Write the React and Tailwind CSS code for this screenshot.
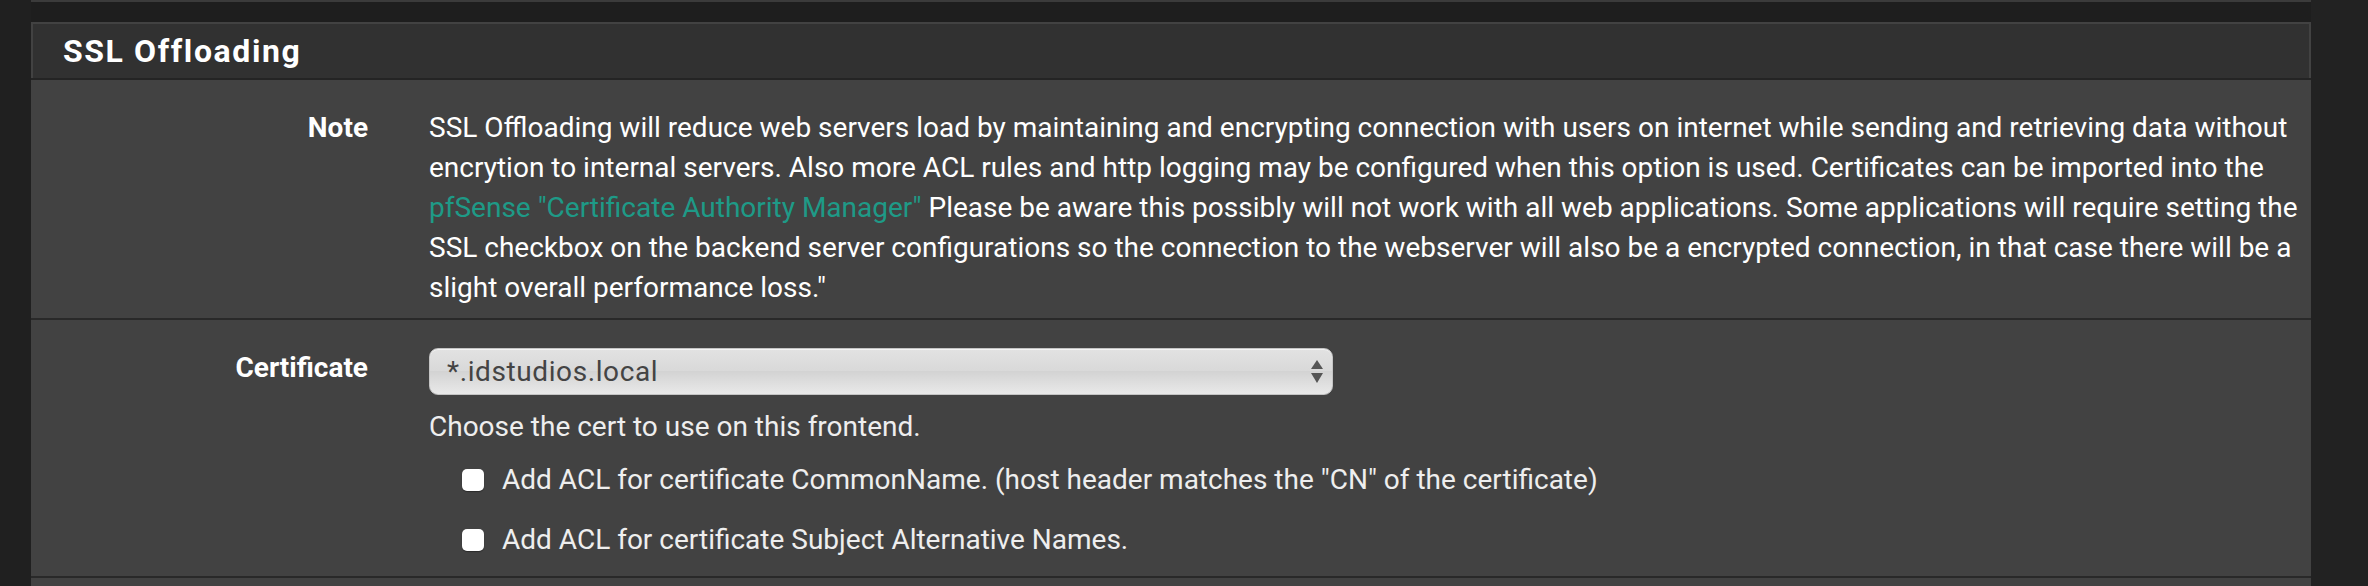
import React from 'react';

const noteLines = [
  'SSL Offloading will reduce web servers load by maintaining and encrypting connection with users on internet while sending and retrieving data without',
  'encrytion to internal servers. Also more ACL rules and http logging may be configured when this option is used. Certificates can be imported into the',
  null,
  'SSL checkbox on the backend server configurations so the connection to the webserver will also be a encrypted connection, in that case there will be a',
  'slight overall performance loss."',
];

const SelectArrows = () => (
  <svg width="14" height="26" viewBox="0 0 14 26" className="shrink-0">
    <polygon points="7,1 13,10 1,10" fill="#555555" />
    <polygon points="1,14 13,14 7,24" fill="#555555" />
  </svg>
);

const Checkbox = ({ label }) => (
  <label className="flex items-center h-[40px] pl-[33px]">
    <span className="w-[22px] h-[22px] rounded-[5px] bg-white shadow-[0_1px_1px_rgba(0,0,0,0.35)] shrink-0" />
    <span className="ml-[18px] text-[#eeeeee] whitespace-nowrap">{label}</span>
  </label>
);

const App = () => {
  return (
    <div className="w-[2368px] h-[586px] bg-[#202020] flex overflow-hidden font-['Roboto',sans-serif] text-[28px] leading-[40px]">
      <div className="w-[31px] shrink-0" />

      <div className="w-[2280px] shrink-0 flex flex-col">
        {/* previous panel edge + gap */}
        <div className="h-[2px] bg-[#3b3b3b]" />
        <div className="h-[20px] bg-[#1e1e1e]" />

        {/* Panel heading */}
        <div className="h-[56px] border-t-2 border-x-2 border-[#424242] bg-[#313131] flex items-center pl-[30px]">
          <h2 className="text-[32px] font-bold tracking-[1.6px] text-white leading-none">SSL Offloading</h2>
        </div>
        <div className="h-[2px] bg-[#242424]" />

        {/* Panel body */}
        <div className="flex-1 bg-[#424242] flex flex-col">
          {/* Note row */}
          <div className="flex pt-[28px] pb-[10px]">
            <div className="w-[337px] shrink-0 text-right font-bold text-white">Note</div>
            <div className="ml-[61px] text-white">
              {noteLines.map((line, i) =>
                line === null ? (
                  <div key={i} className="whitespace-nowrap">
                    <a className="text-[#1e9a87]">pfSense "Certificate Authority Manager"</a>
                    {' Please be aware this possibly will not work with all web applications. Some applications will require setting the'}
                  </div>
                ) : (
                  <div key={i} className="whitespace-nowrap">{line}</div>
                )
              )}
            </div>
          </div>

          <div className="h-[2px] bg-[#292929]" />

          {/* Certificate row */}
          <div className="flex pt-[28px] pb-[16px]">
            <div className="w-[337px] shrink-0 text-right font-bold text-white">Certificate</div>
            <div className="ml-[61px] flex flex-col">
              <div className="w-[904px] h-[47px] rounded-[9px] border border-[#c4c4c4] bg-[linear-gradient(to_bottom,#e2e2e2_0%,#d9d9d9_48%,#d3d3d3_50%,#dedede_75%,#e9e9e9_100%)] shadow-[inset_0_1px_0_rgba(255,255,255,0.6)] flex items-center pl-[17px] pr-[8px]">
                <span className="flex-1 text-[#444444] leading-none tracking-[0.6px]">*.idstudios.local</span>
                <SelectArrows />
              </div>
              <div className="mt-[12px] text-[#eeeeee]">Choose the cert to use on this frontend.</div>
              <div className="mt-[13px] flex flex-col gap-[20px]">
                <Checkbox label={'Add ACL for certificate CommonName. (host header matches the "CN" of the certificate)'} />
                <Checkbox label="Add ACL for certificate Subject Alternative Names." />
              </div>
            </div>
          </div>

          <div className="h-[2px] bg-[#292929]" />
        </div>
      </div>

      <div className="flex-1 bg-[#222222]" />
    </div>
  );
};

export default App;
